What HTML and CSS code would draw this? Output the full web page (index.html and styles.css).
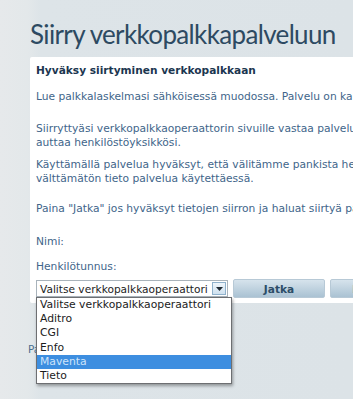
FILE: index.html
```html
<!DOCTYPE html>
<html lang="fi">
<head>
<meta charset="utf-8">
<title>Siirry verkkopalkkapalveluun</title>
<link rel="stylesheet" href="styles.css">
</head>
<body>
<div class="page">
  <h1 class="title">Siirry verkkopalkkapalveluun</h1>
  <div class="card">
    <h2 class="card-title">Hyväksy siirtyminen verkkopalkkaan</h2>
    <p class="text p1">Lue palkkalaskelmasi sähköisessä muodossa. Palvelu on kaikille maksuton.</p>
    <p class="text p2">Siirryttyäsi verkkopalkkaoperaattorin sivuille vastaa palveluntarjoaja kysymyksiisi. Tarvittaessa<br>auttaa henkilöstöyksikkösi.</p>
    <p class="text p3">Käyttämällä palvelua hyväksyt, että välitämme pankista henkilötietosi palveluntarjoajalle ja<br>välttämätön tieto palvelua käytettäessä.</p>
    <p class="text p4">Paina "Jatka" jos hyväksyt tietojen siirron ja haluat siirtyä palveluun.</p>
    <p class="text label">Nimi:</p>
    <p class="text label2">Henkilötunnus:</p>
    <div class="actions">
      <div class="select">
        <span class="select-value">Valitse verkkopalkkaoperaattori</span>
        <span class="select-arrow"><svg width="7" height="4" viewBox="0 0 7 4"><path d="M0 0h7L3.5 4z" fill="#1f2a33"/></svg></span>
        <ul class="options">
          <li>Valitse verkkopalkkaoperaattori</li>
          <li>Aditro</li>
          <li>CGI</li>
          <li>Enfo</li>
          <li class="active">Maventa</li>
          <li>Tieto</li>
        </ul>
      </div>
      <button class="btn">Jatka</button>
      <button class="btn">Peruuta</button>
    </div>
  </div>
  <p class="footer-link">Palaa</p>
</div>
</body>
</html>
```
FILE: styles.css
```css
html, body {
  margin: 0;
  padding: 0;
  overflow: hidden;
}
body {
  width: 353px;
  height: 399px;
  background: linear-gradient(90deg, #e6e9eb 0px, #e3e8ea 28px, #dde4e8 40px, #dce3e7 100%);
  font-family: "DejaVu Sans", Verdana, sans-serif;
}
.page {
  padding: 18px 0 0 30px;
  width: 600px;
}
.title {
  margin: 0 0 7px 0;
  font-family: "Lato", "DejaVu Sans", sans-serif;
  font-weight: 400;
  font-size: 26px;
  line-height: 32px;
  letter-spacing: -0.65px;
  color: #2d4a62;
}
.card {
  background: #fff;
  width: 360px;
  padding: 6px 0 5px 6px;
  border-radius: 2px;
}
.card-title {
  margin: 0;
  font-size: 10.6px;
  font-weight: bold;
  line-height: 14px;
  color: #1c3650;
}
.text {
  margin: 0;
  font-size: 10.7px;
  line-height: 14px;
  color: #41658a;
  white-space: nowrap;
}
.p1 { margin-top: 13px; }
.p2 { margin-top: 18px; }
.p3 { margin-top: 8px; }
.p4 { margin-top: 16px; }
.label { margin-top: 19px; }
.label2 { margin-top: 11px; }
.actions {
  display: flex;
  align-items: center;
  gap: 5px;
  margin-top: 5px;
}
.select {
  position: relative;
  width: 192px;
  height: 17px;
  border: 1px solid #a9b3bb;
  box-sizing: border-box;
  display: flex;
  align-items: center;
  justify-content: space-between;
  background: #fff;
  flex: none;
}
.select-value {
  font-size: 10.6px;
  color: #1d1d1d;
  padding-left: 3px;
  white-space: nowrap;
  overflow: hidden;
}
.select-arrow {
  flex: none;
  width: 14px;
  height: 13px;
  margin-right: 1px;
  border: 1px solid #8fb1cc;
  box-sizing: border-box;
  background: linear-gradient(#eef5fb, #cfe1ef);
  display: flex;
  align-items: center;
  justify-content: center;
}
.options {
  position: absolute;
  left: -1px;
  top: 16px;
  width: 194px;
  margin: 0;
  padding: 0;
  list-style: none;
  background: #fff;
  border: 1px solid #6d6f72;
  box-shadow: 1px 2px 3px rgba(0,0,0,0.35);
  z-index: 2;
}
.options li {
  font-size: 10.8px;
  line-height: 14.2px;
  padding-left: 3px;
  color: #1b1b1b;
  white-space: nowrap;
}
.options li.active {
  background: #3d8ee0;
  color: #cfe4fa;
}
.btn {
  flex: none;
  width: 92px;
  height: 19px;
  border: 1px solid #b7c9d6;
  border-radius: 2px;
  background: linear-gradient(#d6e3ec, #aac2d3);
  font-family: "DejaVu Sans", Verdana, sans-serif;
  font-size: 10.6px;
  font-weight: bold;
  color: #2c4d68;
  padding: 0;
}
.footer-link {
  margin: 40px 0 0 -2px;
  font-size: 10.5px;
  color: #4b6f8f;
}
```
